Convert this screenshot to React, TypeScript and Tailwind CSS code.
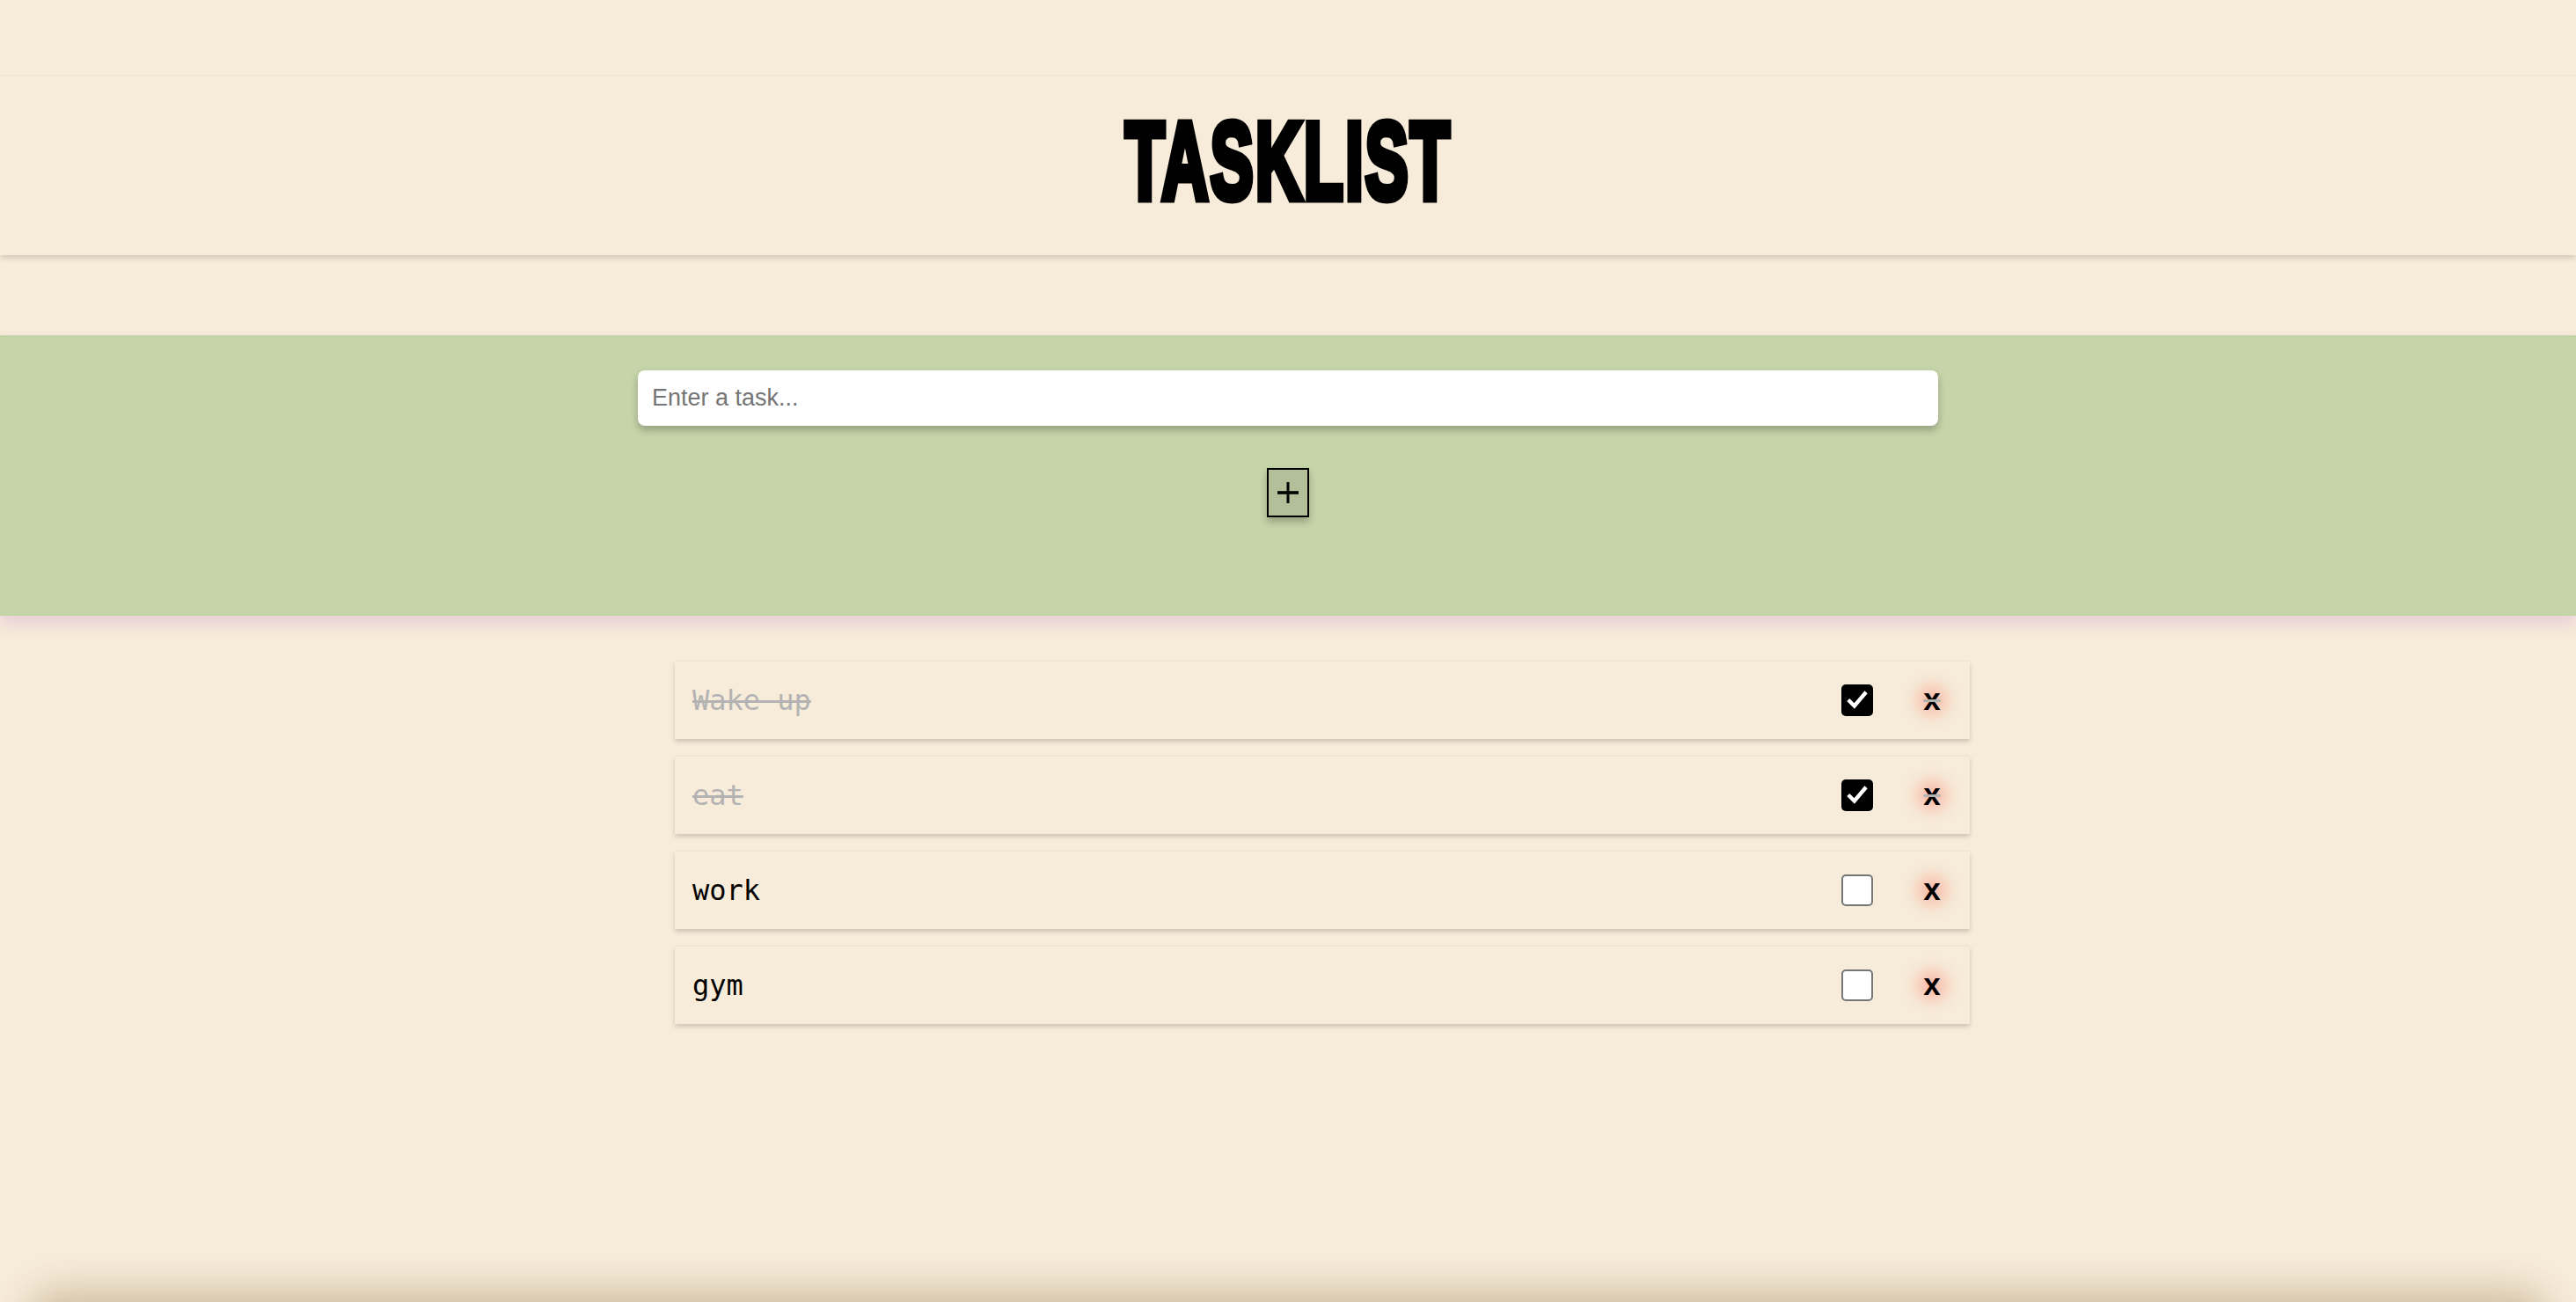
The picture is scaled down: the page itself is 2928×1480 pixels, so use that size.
import React, { useState } from 'react';

type Task = { id: number; text: string; done: boolean };

const initial: Task[] = [
  { id: 1, text: 'Wake up', done: true },
  { id: 2, text: 'eat', done: true },
  { id: 3, text: 'work', done: false },
  { id: 4, text: 'gym', done: false },
];

const App: React.FC = () => {
  const [tasks, setTasks] = useState<Task[]>(initial);
  const [value, setValue] = useState('');

  const toggle = (id: number) =>
    setTasks((t) => t.map((x) => (x.id === id ? { ...x, done: !x.done } : x)));
  const remove = (id: number) => setTasks((t) => t.filter((x) => x.id !== id));
  const add = () => {
    if (!value.trim()) return;
    setTasks((t) => [...t, { id: Date.now(), text: value, done: false }]);
    setValue('');
  };

  return (
    <div className="bg-[#f7ebd9] font-['Liberation_Sans',sans-serif]">
      <main className="h-[1480px] pt-[87px]">
        {/* header */}
        <header className="h-[203px] flex items-center justify-center bg-[#f7ebd9] shadow-[0_4px_6px_rgba(0,0,0,0.12),0_-1px_3px_rgba(0,0,0,0.04)]">
          <h1 className="inline-block -mt-[12px] scale-x-[0.59] text-[124px] leading-none font-bold tracking-[4px] text-black [-webkit-text-stroke:9px_black]">
            TASKLIST
          </h1>
        </header>

        {/* input section */}
        <section className="mt-[91px] h-[319px] bg-[#c6d4a9] flex flex-col items-center pt-[40px] shadow-[0_10px_14px_rgba(232,205,215,0.9)]">
          <input
            value={value}
            onChange={(e) => setValue(e.target.value)}
            placeholder="Enter a task..."
            className="w-[1478px] h-[63px] rounded-[8px] bg-white pl-[16px] text-[27px] text-black placeholder:text-[#757575] outline-none shadow-[0_5px_8px_rgba(0,0,0,0.25)] font-['Liberation_Sans',sans-serif]"
          />
          <button
            onClick={add}
            className="mt-[48px] w-[48px] h-[56px] border-2 border-black bg-[#b3bf99] flex items-center justify-center text-black shadow-[0_5px_8px_rgba(0,0,0,0.25)]"
          >
            <svg width="24" height="24" viewBox="0 0 24 24">
              <path d="M12 0v24" stroke="black" strokeWidth="3" />
              <path d="M0 12h24" stroke="black" strokeWidth="3.6" />
            </svg>
          </button>
        </section>

        {/* list */}
        <div className="mx-auto w-[1550px] pl-[78px] pt-[52px]">
          <ul className="flex flex-col gap-[20px]">
            {tasks.map((t) => (
              <li
                key={t.id}
                className={`h-[88px] flex items-center pl-[20px] pr-[23px] bg-[#f7ebd9] shadow-[0_3px_5px_rgba(0,0,0,0.16),0_-1px_2px_rgba(0,0,0,0.03)] font-['DejaVu_Sans_Mono',monospace] text-[32px] ${
                  t.done ? 'line-through decoration-[#b3b3b3] decoration-[3px] text-[#b3b3b3]' : 'text-black'
                }`}
              >
                <span className="flex-1">{t.text}</span>
                <button
                  role="checkbox"
                  aria-checked={t.done}
                  onClick={() => toggle(t.id)}
                  className={`w-[36px] h-[36px] rounded-[5px] flex items-center justify-center ${
                    t.done ? 'bg-black' : 'bg-white border-2 border-[#767676]'
                  }`}
                >
                  {t.done && (
                    <svg width="26" height="26" viewBox="0 0 24 24">
                      <path d="M4 13l5 5L20 5" fill="none" stroke="white" strokeWidth="4" strokeLinecap="square" />
                    </svg>
                  )}
                </button>
                <button
                  onClick={() => remove(t.id)}
                  className="ml-[47px] w-[40px] h-[40px] relative flex items-center justify-center"
                >
                  <span className="absolute inset-[4px] rounded-full bg-[rgba(248,160,140,0.7)] blur-[9px]" />
                  <span className="relative font-['Liberation_Sans',sans-serif] font-bold text-[35px] leading-none -mt-[3px] text-black">
                    x
                  </span>
                  {t.done && <span className="absolute left-[11px] right-[11px] top-[19px] h-[3px] bg-[#b3b3b3]" />}
                </button>
              </li>
            ))}
          </ul>
        </div>
      </main>
      <footer className="mx-[30px] h-[200px] rounded-[40px] bg-[#f7ebd9] shadow-[0_-14px_40px_rgba(110,80,30,0.28)]" />
    </div>
  );
};

export default App;
